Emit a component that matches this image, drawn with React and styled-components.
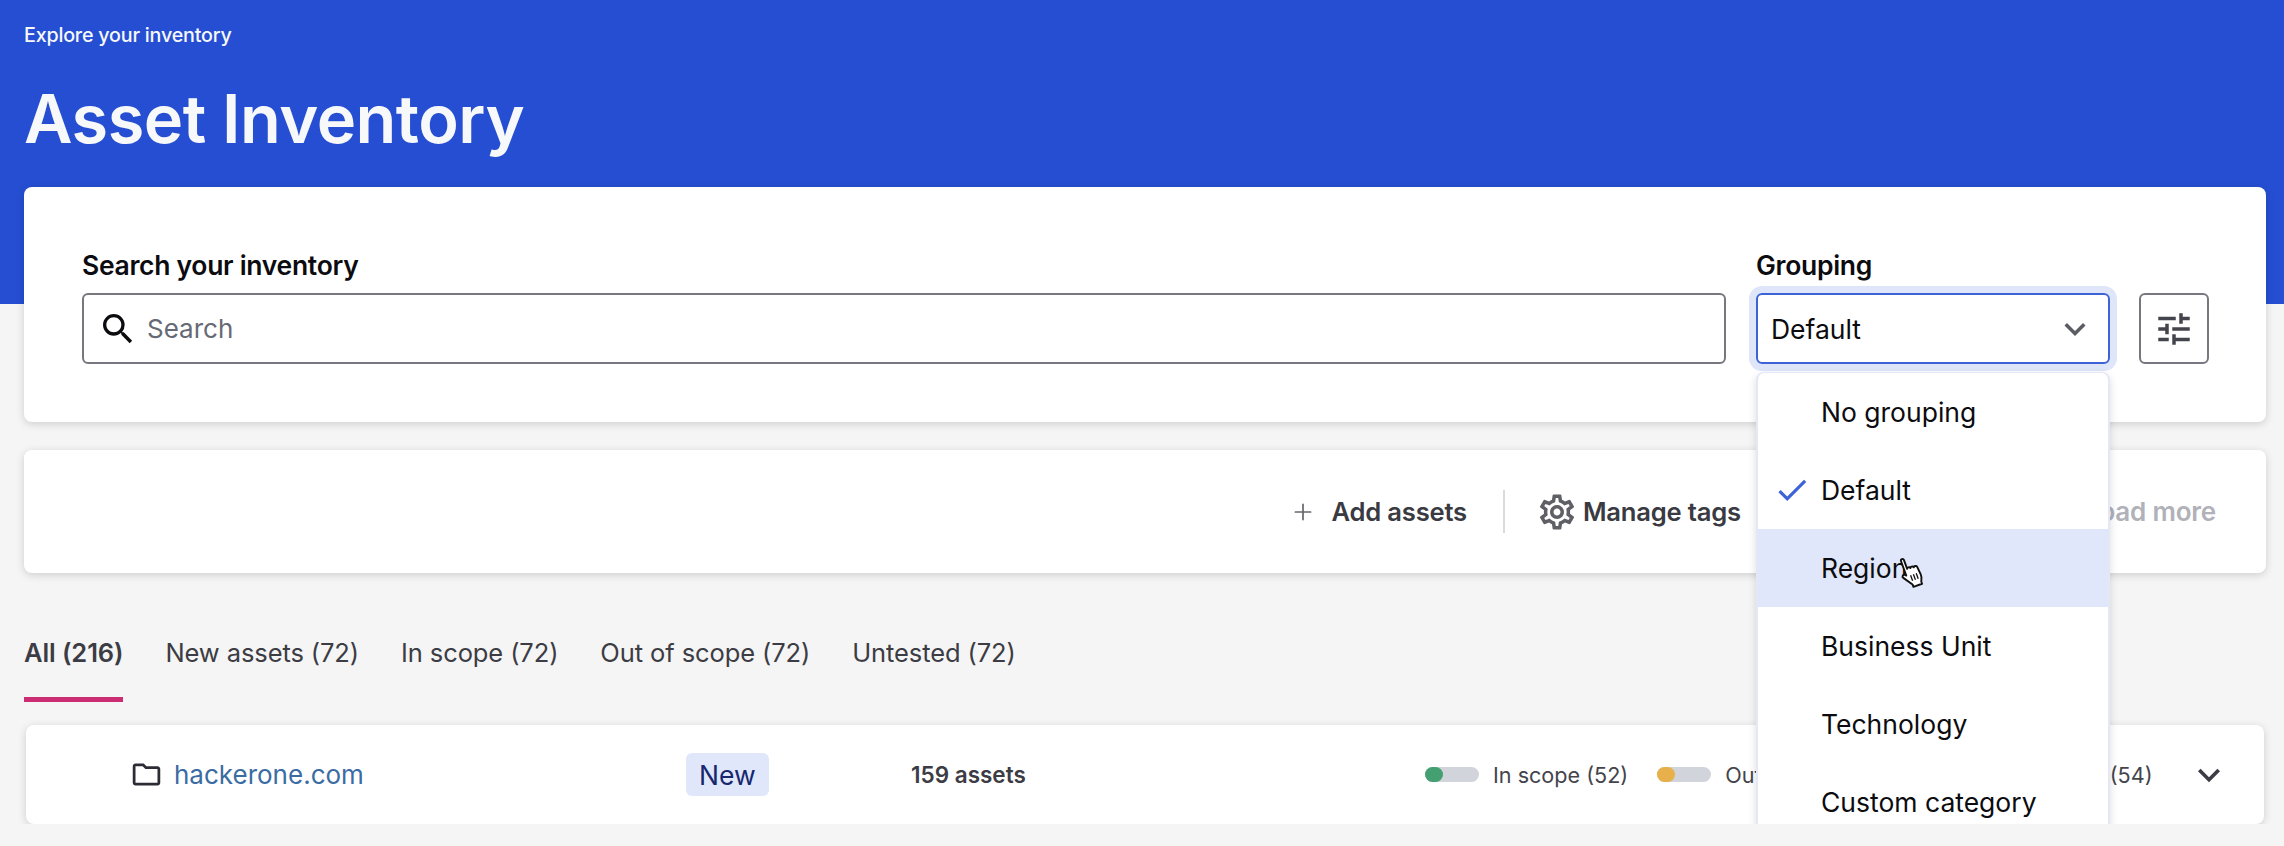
import styled, { createGlobalStyle } from "styled-components";
import { Plus } from "lucide-react";
import { MdSearch, MdTune, MdExpandMore, MdCheck, MdOutlineFolder, MdOutlineSettings } from "react-icons/md";

const groupingOptions = ["No grouping", "Default", "Region", "Business Unit", "Technology", "Custom category"];
const tabs = ["All (216)", "New assets (72)", "In scope (72)", "Out of scope (72)", "Untested (72)"];
const stats = [
    { label: "In scope (52)", color: "#44a071" },
    { label: "Out of scope (52)", color: "#e8b04a" },
    { label: "Untested (54)", color: "#c9cbd3" },
];

export default function App() {
    return (
        <>
            <GlobalStyle />
            <Hero>
                <Breadcrumb>Explore your inventory</Breadcrumb>
                <Title>Asset Inventory</Title>
            </Hero>
            <Main>
                <SearchCard>
                    <SearchField>
                        <FieldLabel>Search your inventory</FieldLabel>
                        <SearchBox>
                            <MdSearch size={40} color="#0c0c10" />
                            <SearchInput placeholder="Search" />
                        </SearchBox>
                    </SearchField>
                    <GroupingField>
                        <FieldLabel>Grouping</FieldLabel>
                        <Select>
                            <span>Default</span>
                            <MdExpandMore size={42} color="#5c5c64" />
                        </Select>
                        <Dropdown>
                            {groupingOptions.map((option) => (
                                <Option key={option} $hovered={option === "Region"}>
                                    {option === "Default" && (
                                        <CheckMark>
                                            <MdCheck size={38} color="#3d63d6" />
                                        </CheckMark>
                                    )}
                                    {option}
                                    {option === "Region" && <HandCursor />}
                                </Option>
                            ))}
                        </Dropdown>
                    </GroupingField>
                    <FilterButton>
                        <MdTune size={42} color="#44444c" />
                    </FilterButton>
                </SearchCard>

                <ActionsCard>
                    <ActionButton>
                        <Plus size={26} color="#66666c" strokeWidth={1.6} />
                        <span>Add assets</span>
                    </ActionButton>
                    <ActionDivider />
                    <ManageButton>
                        <MdOutlineSettings size={42} color="#5f5f66" />
                        <span>Manage tags</span>
                    </ManageButton>
                    <LoadMore>Load more</LoadMore>
                </ActionsCard>

                <Tabs>
                    {tabs.map((tab, i) => (
                        <Tab key={tab} $active={i === 0}>
                            {tab}
                        </Tab>
                    ))}
                </Tabs>

                <AssetRow>
                    <AssetName>
                        <MdOutlineFolder size={33} color="#2c2c34" />
                        <AssetLink>hackerone.com</AssetLink>
                    </AssetName>
                    <div>
                        <NewBadge>New</NewBadge>
                    </div>
                    <AssetCount>159 assets</AssetCount>
                    <Stats>
                        {stats.map((stat) => (
                            <Stat key={stat.label}>
                                <Pill $color={stat.color} />
                                {stat.label}
                            </Stat>
                        ))}
                    </Stats>
                    <MdExpandMore size={44} color="#3c3c44" />
                </AssetRow>
            </Main>
        </>
    );
}

function HandCursor() {
    return (
        <CursorSvg viewBox="0 0 26 30" width="31" height="36">
            <path
                d="M6 3.5c0-1.6 2.6-1.6 2.6 0v8c0-1 2.6-1.2 2.800.300 0-1.200 2.700-1.200 2.900.400.200-1 2.600-.900 2.800.600l.600 7c.200 2.600-.800 4-1.600 5.700v2H8.400v-2.200L3 17.500c-1.100-1.500.800-3 2.200-1.800L6 16.500z"
                fill="#fff"
                stroke="#111"
                strokeWidth="1.6"
                strokeLinejoin="round"
            />
            <path d="M9.500 17.500v5M12 17.500v5M14.500 17.500v5" stroke="#111" strokeWidth="1.100" />
        </CursorSvg>
    );
}

const GlobalStyle = createGlobalStyle`
    html, body {
        margin: 0;
        padding: 0;
        background: #f5f5f5;
        font-family: Inter, "Noto Sans", sans-serif;
        color: #0c0c10;
    }
    * {
        box-sizing: border-box;
    }
`;

const Hero = styled.header`
    height: 304px;
    padding: 22px 24px 0;
    background: #254ed2;
    color: #f7f8fa;
`;

const Breadcrumb = styled.div`
    font-size: 19.7px;
    line-height: 26px;
    font-weight: 500;
    letter-spacing: -0.2px;
`;

const Title = styled.h1`
    margin: 35px 0 0;
    font-size: 66.7px;
    line-height: 72px;
    font-weight: 600;
    letter-spacing: -0.5px;
`;

const Main = styled.main`
    margin-top: -117px;
    padding: 0 18px 0 24px;
`;

const Card = styled.section`
    background: #fff;
    border-radius: 8px;
    box-shadow: 0 2px 8px rgba(0, 0, 0, 0.16);
`;

const SearchCard = styled(Card)`
    display: flex;
    align-items: flex-end;
    gap: 30px;
    height: 235px;
    padding: 60px 57px 58px 58px;
`;

const SearchField = styled.div`
    flex: 1;
`;

const GroupingField = styled.div`
    position: relative;
    width: 354px;
`;

const FieldLabel = styled.div`
    margin-bottom: 13px;
    font-size: 26.5px;
    line-height: 30px;
    font-weight: 600;
    letter-spacing: -0.3px;
`;

const SearchBox = styled.div`
    display: flex;
    align-items: center;
    gap: 7px;
    height: 71px;
    padding: 0 14px;
    border: 2px solid #77777f;
    border-radius: 6px;
`;

const SearchInput = styled.input`
    flex: 1;
    border: 0;
    outline: 0;
    background: none;
    font-family: inherit;
    font-size: 26px;
    color: #0c0c10;

    &::placeholder {
        color: #666a75;
    }
`;

const Select = styled.div`
    display: flex;
    align-items: center;
    justify-content: space-between;
    height: 71px;
    padding: 0 12px 0 13px;
    border: 2px solid #3d63d6;
    border-radius: 6px;
    box-shadow: 0 0 0 7px #dfe6fa;
    font-size: 26.5px;
`;

const Dropdown = styled.div`
    position: absolute;
    top: 122px;
    left: 0;
    z-index: 10;
    width: 100%;
    background: #fff;
    border: 2px solid #e2e8f8;
    border-top-width: 1px;
    border-radius: 8px;
    box-shadow: 0 3px 8px rgba(0, 0, 0, 0.14);
`;

const Option = styled.div`
    position: relative;
    display: flex;
    align-items: center;
    height: 78px;
    padding-left: 63px;
    font-size: 26.5px;
    background: ${({ $hovered }) => ($hovered ? "#e0e7fa" : "transparent")};
`;

const CheckMark = styled.span`
    position: absolute;
    left: 15px;
    top: 20px;
    display: flex;
`;

const CursorSvg = styled.svg`
    position: absolute;
    left: 140px;
    top: 24px;
    transform: rotate(-20deg);
`;

const FilterButton = styled.button`
    display: flex;
    align-items: center;
    justify-content: center;
    flex: none;
    width: 70px;
    height: 71px;
    margin-left: -1px;
    background: #fff;
    border: 2px solid #77777f;
    border-radius: 6px;
`;

const ActionsCard = styled(Card)`
    display: flex;
    align-items: center;
    justify-content: flex-end;
    height: 123px;
    margin-top: 28px;
    padding-right: 50px;
`;

const ActionButton = styled.div`
    display: flex;
    align-items: center;
    gap: 15px;
    font-size: 25.6px;
    font-weight: 600;
    letter-spacing: -0.2px;
    color: #3a3a42;
`;

const ManageButton = styled(ActionButton)`
    gap: 5px;
`;

const ActionDivider = styled.div`
    width: 2px;
    height: 43px;
    margin: 0 31px 0 36px;
    background: #d9d9de;
`;

const LoadMore = styled.div`
    margin-left: 344px;
    font-size: 26px;
    font-weight: 600;
    letter-spacing: -0.2px;
    color: #b0b1b9;
`;

const Tabs = styled.nav`
    display: flex;
    gap: 42px;
    margin-top: 65px;
`;

const Tab = styled.div`
    padding-bottom: 29px;
    border-bottom: 5px solid ${({ $active }) => ($active ? "#cc2d72" : "transparent")};
    font-size: 25.5px;
    line-height: 30px;
    font-weight: ${({ $active }) => ($active ? 600 : 400)};
    letter-spacing: -0.1px;
    color: #3c3c44;
`;

const AssetRow = styled(Card)`
    display: grid;
    grid-template-columns: 556px 225px 514px 1fr auto;
    align-items: center;
    height: 99px;
    margin: 23px 2px 0;
    padding: 0 33px 0 104px;
`;

const AssetName = styled.div`
    display: flex;
    align-items: center;
    gap: 11px;
`;

const AssetLink = styled.span`
    font-size: 26px;
    color: #3a6ca3;
`;

const NewBadge = styled.span`
    display: inline-flex;
    align-items: center;
    height: 43px;
    padding: 0 13px;
    border-radius: 6px;
    background: #e0e7fa;
    font-size: 26.5px;
    color: #17276f;
`;

const AssetCount = styled.div`
    font-size: 22.5px;
    font-weight: 600;
    color: #3c3c44;
`;

const Stats = styled.div`
    display: flex;
    gap: 29px;
`;

const Stat = styled.div`
    display: flex;
    align-items: center;
    gap: 14px;
    font-size: 21.6px;
    color: #44444c;

    &:last-child {
        margin-left: 9px;
    }
`;

const Pill = styled.span`
    position: relative;
    width: 54px;
    height: 15px;
    border-radius: 8px;
    background: #d2d4db;

    &::before {
        content: "";
        position: absolute;
        inset: 0 auto 0 0;
        width: 18px;
        border-radius: 8px;
        background: ${({ $color }) => $color};
    }
`;
